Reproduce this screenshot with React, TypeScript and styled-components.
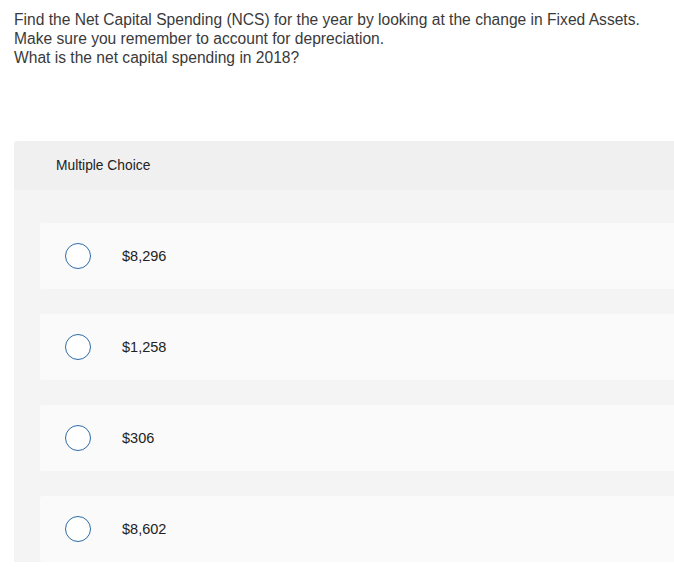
import styled, { createGlobalStyle } from 'styled-components';

const GlobalStyle = createGlobalStyle`
  html, body {
    margin: 0;
    padding: 0;
    background: #fff;
    overflow: hidden;
  }
  body {
    font-family: "Liberation Sans", Arial, sans-serif;
    color: #333;
  }
`;

const Page = styled.div`
  padding: 10px 0 0 14px;
`;

const Question = styled.div`
  font-size: 15.6px;
  line-height: 19px;
  color: #3a3a3a;
  margin-bottom: 74px;
  white-space: nowrap;
`;

const Panel = styled.section`
  border-radius: 3px 0 0 0;
  overflow: hidden;
  margin-right: -20px;
`;

const PanelHeader = styled.div`
  background: #f0f0f0;
  height: 49px;
  display: flex;
  align-items: center;
  padding-left: 42px;
  font-size: 13.8px;
  color: #222;
`;

const Choices = styled.div`
  background: #f4f4f4;
  padding: 33px 0 0 26px;
  display: flex;
  flex-direction: column;
  gap: 25px;
`;

const Choice = styled.label`
  background: #fafafa;
  border-radius: 3px;
  height: 66px;
  display: flex;
  align-items: center;
  padding-left: 25px;
  cursor: pointer;
`;

const Radio = styled.span`
  width: 24px;
  height: 24px;
  border: 1.6px solid #2c6aa8;
  border-radius: 50%;
  background: #fff;
  flex-shrink: 0;
`;

const Amount = styled.span`
  margin-left: 31px;
  font-size: 14.5px;
  color: #222;
`;

const options = ['$8,296', '$1,258', '$306', '$8,602'];

export default function App() {
  return (
    <>
      <GlobalStyle />
      <Page>
        <Question>
          Find the Net Capital Spending (NCS) for the year by looking at the change in Fixed Assets.
          <br />
          Make sure you remember to account for depreciation.
          <br />
          What is the net capital spending in 2018?
        </Question>
        <Panel>
          <PanelHeader>Multiple Choice</PanelHeader>
          <Choices>
            {options.map((o) => (
              <Choice key={o}>
                <Radio />
                <Amount>{o}</Amount>
              </Choice>
            ))}
          </Choices>
        </Panel>
      </Page>
    </>
  );
}
